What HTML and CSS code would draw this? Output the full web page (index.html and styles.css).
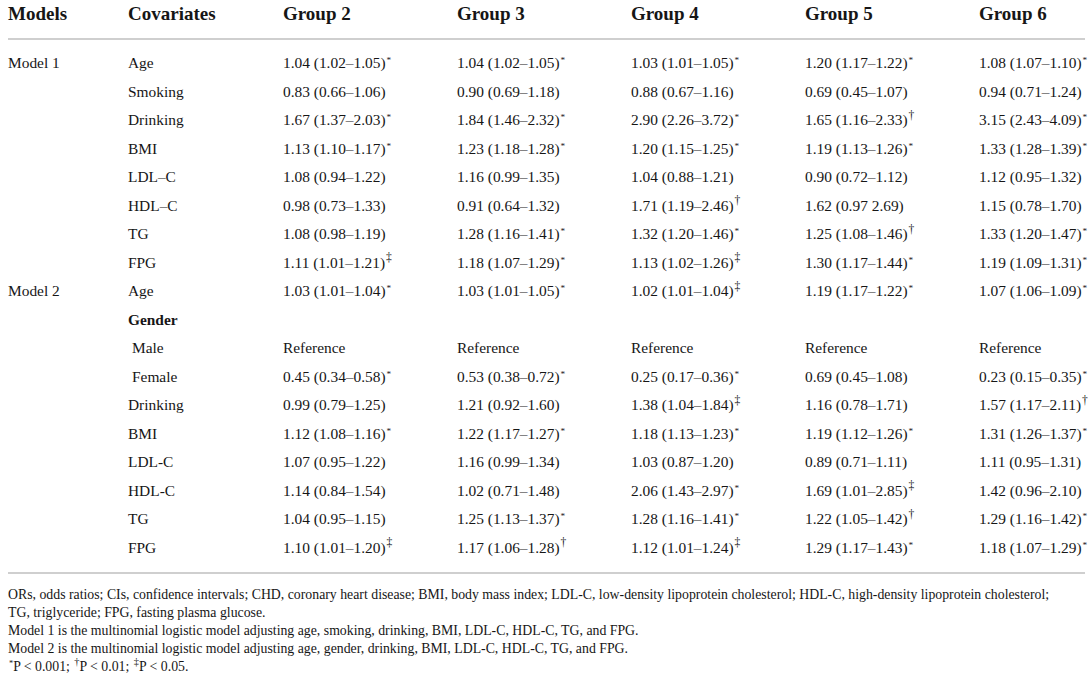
FILE: index.html
```html
<!DOCTYPE html>
<html>
<head>
<meta charset="utf-8">
<link rel="stylesheet" href="styles.css">
</head>
<body>
<div class="wrap">
  <div class="table">
    <div class="row head">
      <div>Models</div><div>Covariates</div><div>Group 2</div><div>Group 3</div><div>Group 4</div><div>Group 5</div><div>Group 6</div>
    </div>
    <div class="body">
      <div class="row"><div>Model 1</div><div>Age</div><div>1.04 (1.02–1.05)<sup>*</sup></div><div>1.04 (1.02–1.05)<sup>*</sup></div><div>1.03 (1.01–1.05)<sup>*</sup></div><div>1.20 (1.17–1.22)<sup>*</sup></div><div>1.08 (1.07–1.10)<sup>*</sup></div></div>
      <div class="row"><div></div><div>Smoking</div><div>0.83 (0.66–1.06)</div><div>0.90 (0.69–1.18)</div><div>0.88 (0.67–1.16)</div><div>0.69 (0.45–1.07)</div><div>0.94 (0.71–1.24)</div></div>
      <div class="row"><div></div><div>Drinking</div><div>1.67 (1.37–2.03)<sup>*</sup></div><div>1.84 (1.46–2.32)<sup>*</sup></div><div>2.90 (2.26–3.72)<sup>*</sup></div><div>1.65 (1.16–2.33)<sup class="dg">†</sup></div><div>3.15 (2.43–4.09)<sup>*</sup></div></div>
      <div class="row"><div></div><div>BMI</div><div>1.13 (1.10–1.17)<sup>*</sup></div><div>1.23 (1.18–1.28)<sup>*</sup></div><div>1.20 (1.15–1.25)<sup>*</sup></div><div>1.19 (1.13–1.26)<sup>*</sup></div><div>1.33 (1.28–1.39)<sup>*</sup></div></div>
      <div class="row"><div></div><div>LDL–C</div><div>1.08 (0.94–1.22)</div><div>1.16 (0.99–1.35)</div><div>1.04 (0.88–1.21)</div><div>0.90 (0.72–1.12)</div><div>1.12 (0.95–1.32)</div></div>
      <div class="row"><div></div><div>HDL–C</div><div>0.98 (0.73–1.33)</div><div>0.91 (0.64–1.32)</div><div>1.71 (1.19–2.46)<sup class="dg">†</sup></div><div>1.62 (0.97 2.69)</div><div>1.15 (0.78–1.70)</div></div>
      <div class="row"><div></div><div>TG</div><div>1.08 (0.98–1.19)</div><div>1.28 (1.16–1.41)<sup>*</sup></div><div>1.32 (1.20–1.46)<sup>*</sup></div><div>1.25 (1.08–1.46)<sup class="dg">†</sup></div><div>1.33 (1.20–1.47)<sup>*</sup></div></div>
      <div class="row"><div></div><div>FPG</div><div>1.11 (1.01–1.21)<sup class="dg">‡</sup></div><div>1.18 (1.07–1.29)<sup>*</sup></div><div>1.13 (1.02–1.26)<sup class="dg">‡</sup></div><div>1.30 (1.17–1.44)<sup>*</sup></div><div>1.19 (1.09–1.31)<sup>*</sup></div></div>
      <div class="row"><div>Model 2</div><div>Age</div><div>1.03 (1.01–1.04)<sup>*</sup></div><div>1.03 (1.01–1.05)<sup>*</sup></div><div>1.02 (1.01–1.04)<sup class="dg">‡</sup></div><div>1.19 (1.17–1.22)<sup>*</sup></div><div>1.07 (1.06–1.09)<sup>*</sup></div></div>
      <div class="row"><div></div><div class="bold">Gender</div><div></div><div></div><div></div><div></div><div></div></div>
      <div class="row"><div></div><div class="ind">Male</div><div>Reference</div><div>Reference</div><div>Reference</div><div>Reference</div><div>Reference</div></div>
      <div class="row"><div></div><div class="ind">Female</div><div>0.45 (0.34–0.58)<sup>*</sup></div><div>0.53 (0.38–0.72)<sup>*</sup></div><div>0.25 (0.17–0.36)<sup>*</sup></div><div>0.69 (0.45–1.08)</div><div>0.23 (0.15–0.35)<sup>*</sup></div></div>
      <div class="row"><div></div><div>Drinking</div><div>0.99 (0.79–1.25)</div><div>1.21 (0.92–1.60)</div><div>1.38 (1.04–1.84)<sup class="dg">‡</sup></div><div>1.16 (0.78–1.71)</div><div>1.57 (1.17–2.11)<sup class="dg">†</sup></div></div>
      <div class="row"><div></div><div>BMI</div><div>1.12 (1.08–1.16)<sup>*</sup></div><div>1.22 (1.17–1.27)<sup>*</sup></div><div>1.18 (1.13–1.23)<sup>*</sup></div><div>1.19 (1.12–1.26)<sup>*</sup></div><div>1.31 (1.26–1.37)<sup>*</sup></div></div>
      <div class="row"><div></div><div>LDL-C</div><div>1.07 (0.95–1.22)</div><div>1.16 (0.99–1.34)</div><div>1.03 (0.87–1.20)</div><div>0.89 (0.71–1.11)</div><div>1.11 (0.95–1.31)</div></div>
      <div class="row"><div></div><div>HDL-C</div><div>1.14 (0.84–1.54)</div><div>1.02 (0.71–1.48)</div><div>2.06 (1.43–2.97)<sup>*</sup></div><div>1.69 (1.01–2.85)<sup class="dg">‡</sup></div><div>1.42 (0.96–2.10)</div></div>
      <div class="row"><div></div><div>TG</div><div>1.04 (0.95–1.15)</div><div>1.25 (1.13–1.37)<sup>*</sup></div><div>1.28 (1.16–1.41)<sup>*</sup></div><div>1.22 (1.05–1.42)<sup class="dg">†</sup></div><div>1.29 (1.16–1.42)<sup>*</sup></div></div>
      <div class="row"><div></div><div>FPG</div><div>1.10 (1.01–1.20)<sup class="dg">‡</sup></div><div>1.17 (1.06–1.28)<sup class="dg">†</sup></div><div>1.12 (1.01–1.24)<sup class="dg">‡</sup></div><div>1.29 (1.17–1.43)<sup>*</sup></div><div>1.18 (1.07–1.29)<sup>*</sup></div></div>
    </div>
  </div>
  <div class="notes">
    <p>ORs, odds ratios; CIs, confidence intervals; CHD, coronary heart disease; BMI, body mass index; LDL-C, low-density lipoprotein cholesterol; HDL-C, high-density lipoprotein cholesterol;<br>TG, triglyceride; FPG, fasting plasma glucose.</p>
    <p>Model 1 is the multinomial logistic model adjusting age, smoking, drinking, BMI, LDL-C, HDL-C, TG, and FPG.</p>
    <p>Model 2 is the multinomial logistic model adjusting age, gender, drinking, BMI, LDL-C, HDL-C, TG, and FPG.</p>
    <p><sup>*</sup>P &lt; 0.001; <sup class="dg">†</sup>P &lt; 0.01; <sup class="dg">‡</sup>P &lt; 0.05.</p>
  </div>
</div>
</body>
</html>
```

FILE: styles.css
```css
html, body {
  margin: 0;
  padding: 0;
  background: #ffffff;
}
body {
  font-family: "Liberation Serif", "Times New Roman", serif;
  color: #161616;
}
.wrap {
  padding: 0 4px 0 8px;
}
.row {
  display: grid;
  grid-template-columns: 120px 155px 174px 174px 174px 174px 1fr;
  align-items: center;
}
.head {
  font-weight: bold;
  font-size: 19px;
  line-height: 24px;
  padding-top: 2px;
  padding-bottom: 12px;
  border-bottom: 2px solid #cfcfcf;
}
.body {
  padding: 9px 0 10px;
  border-bottom: 2px solid #cfcfcf;
  font-size: 15.4px;
}
.body .row {
  height: 28.5px;
  line-height: 20px;
  white-space: nowrap;
}
.bold {
  font-weight: bold;
}
.ind {
  padding-left: 4px;
}
sup {
  font-size: 0.6em;
  line-height: 0;
  vertical-align: 0.55em;
  margin-left: 1px;
}
sup.dg {
  font-size: 0.75em;
}
.notes {
  padding-top: 12px;
  font-size: 13.8px;
  line-height: 18px;
}
.notes p {
  margin: 0;
}
```
